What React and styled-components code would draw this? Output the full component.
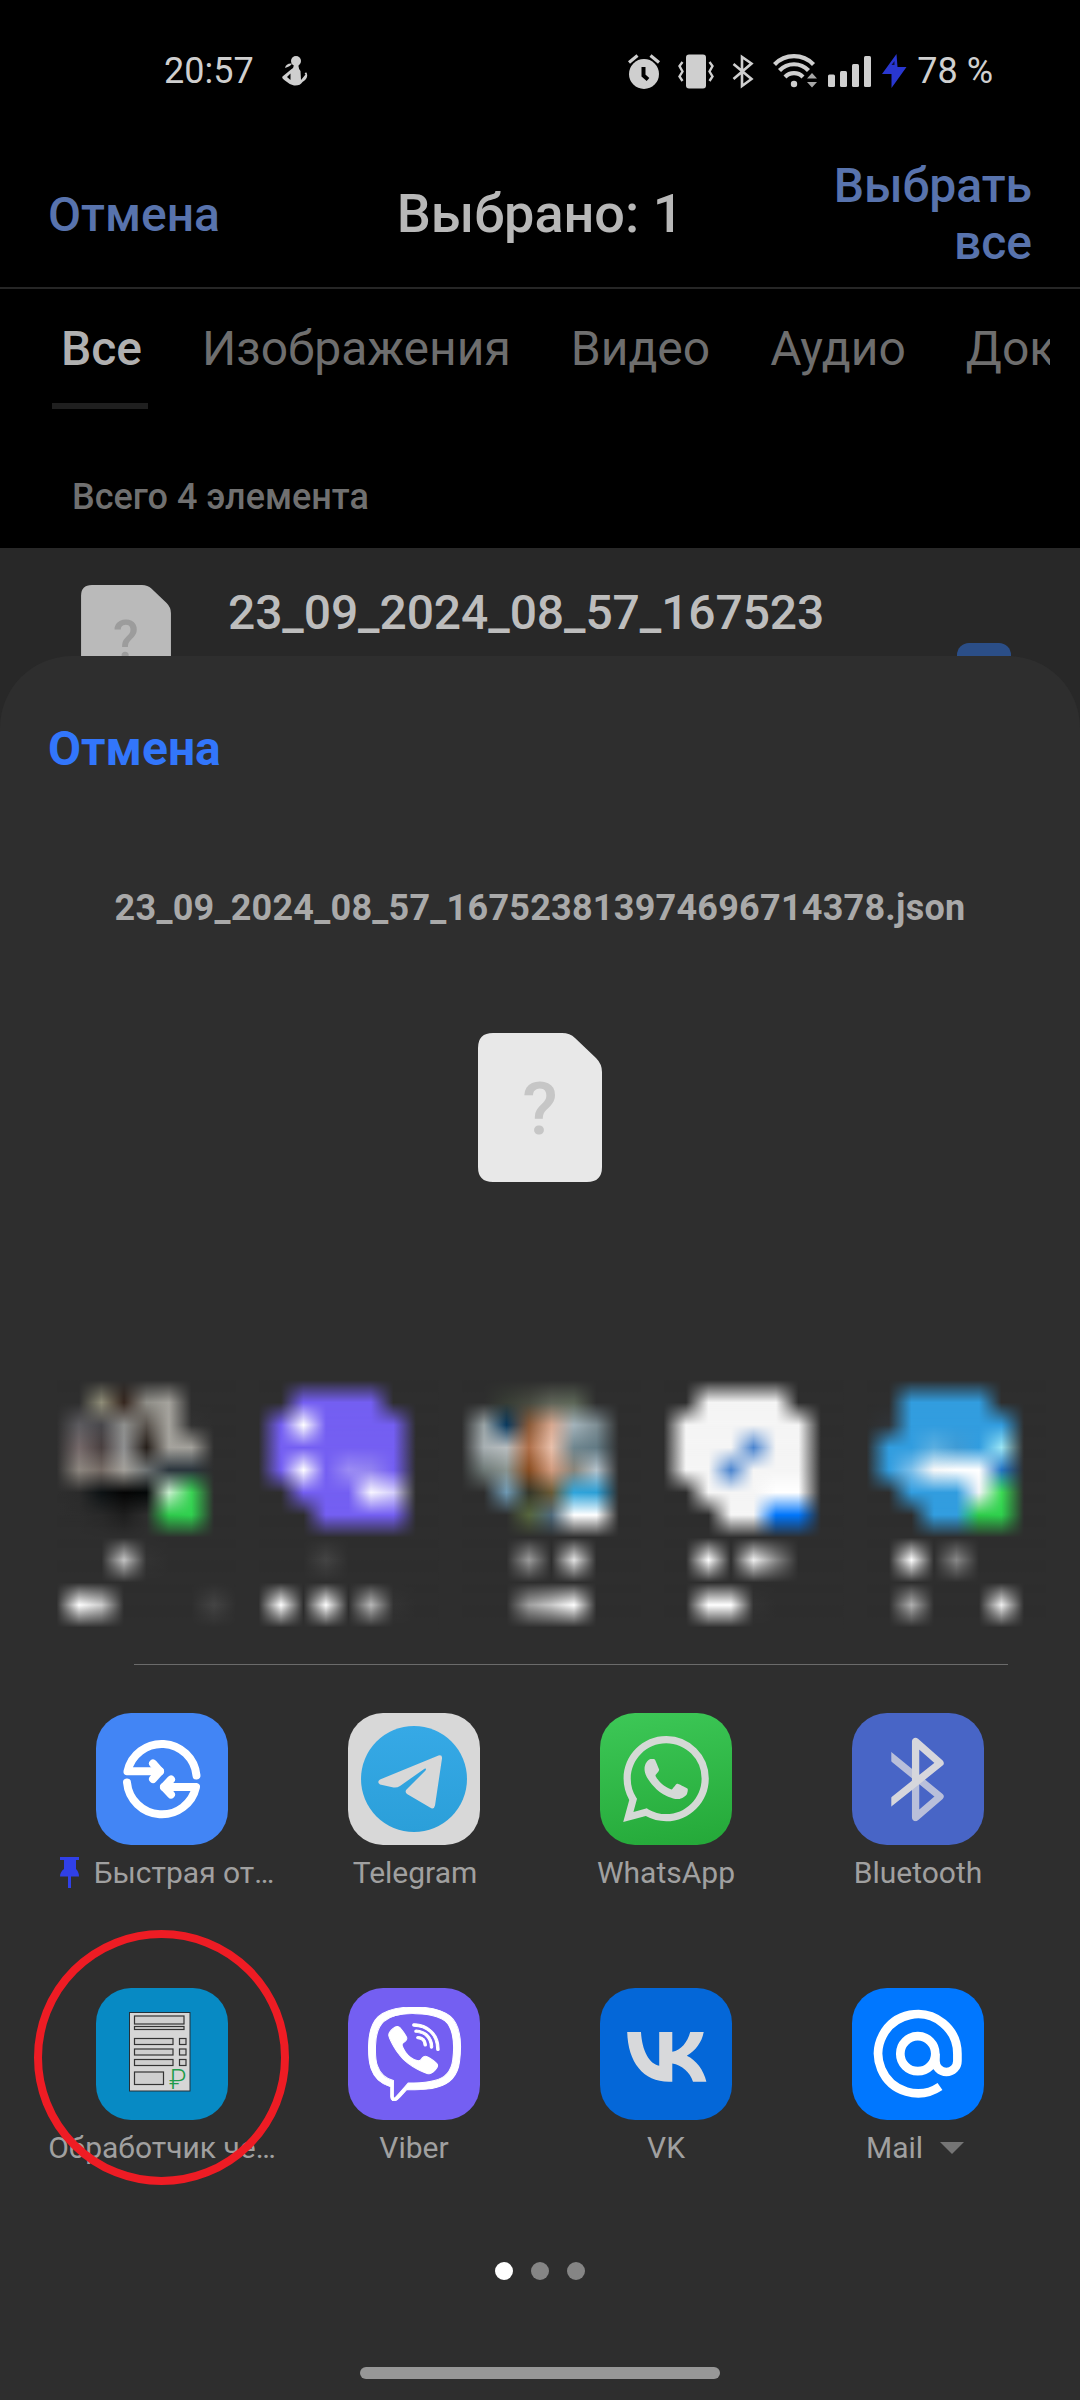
import React from "react";
import styled, { createGlobalStyle, css } from "styled-components";
import { SiWhatsapp, SiViber } from "react-icons/si";

const GlobalStyle = createGlobalStyle`
  *, *::before, *::after { box-sizing: border-box; }
  body { margin: 0; background: #000; font-family: Roboto, "Noto Sans", sans-serif; }
  svg { display: block; flex: none; }
`;

const Screen = styled.div`
  width: 1080px;
  height: 2400px;
  display: flex;
  flex-direction: column;
  overflow: hidden;
  background: #000;
`;

const StatusBar = styled.header`
  height: 142px;
  padding: 0 87px 0 164px;
  display: flex;
  align-items: center;
  justify-content: space-between;
  color: #cfcfcf;
  font-size: 36px;
`;

const StatusGroup = styled.div`
  display: flex;
  align-items: center;
  gap: ${(p) => p.$gap}px;
`;

const TopBar = styled.div`
  height: 147px;
  padding: 0 48px 1px;
  display: grid;
  grid-template-columns: 240px 1fr 240px;
  align-items: center;
  border-bottom: 2px solid #262626;
`;

const TextAction = styled.button`
  padding: 0;
  border: 0;
  background: none;
  font: 500 48px/57px Roboto, "Noto Sans", sans-serif;
  color: #5873ad;
  text-align: ${(p) => p.$align || "left"};
  ${(p) =>
    p.$accent &&
    css`
      color: #3276fb;
      font-weight: 700;
    `}
`;

const Title = styled.h1`
  margin: 0 0 1px;
  text-align: center;
  font-size: 54px;
  line-height: 64px;
  font-weight: 500;
  color: #b8b8b8;
`;

const Tabs = styled.nav`
  height: 120px;
  margin: 0 30px 0 52px;
  display: flex;
  gap: 45px;
  overflow: hidden;
`;

const Tab = styled.div`
  flex: none;
  height: 120px;
  padding: 31px 6px 0 9px;
  font-size: 48px;
  line-height: 57px;
  font-weight: ${(p) => (p.$active ? 500 : 400)};
  color: ${(p) => (p.$active ? "#b0b0b0" : "#6e6e6e")};
  border-bottom: 6px solid ${(p) => (p.$active ? "#1f1f1f" : "transparent")};
`;

const Summary = styled.div`
  height: 139px;
  padding: 67px 0 0 72px;
  font-size: 36px;
  line-height: 42px;
  font-weight: 500;
  color: #707070;
`;

const FileRow = styled.div`
  height: 108px;
  padding: 0 69px 0 81px;
  display: flex;
  align-items: flex-start;
  overflow: hidden;
  background: #282828;
  svg { margin-top: 37px; }
`;

const FileName = styled.div`
  flex: 1;
  margin: 36px 0 0 57px;
  font-size: 48px;
  line-height: 57px;
  font-weight: 500;
  letter-spacing: -0.1px;
  color: #bdbdbd;
`;

const Checkbox = styled.div`
  width: 54px;
  height: 54px;
  margin-top: 95px;
  border-radius: 12px;
  background: #2b4e87;
`;

const SheetBackdrop = styled.div`
  flex: 1;
  display: flex;
  background: #282828;
`;

const Sheet = styled.section`
  flex: 1;
  padding-top: 64px;
  display: flex;
  flex-direction: column;
  border-radius: 72px 72px 0 0;
  background: #2e2e2e;
`;

const SheetActions = styled.div`
  padding-left: 48px;
  line-height: 57px;
  display: flex;
`;

const SharedName = styled.div`
  margin-top: 110px;
  text-align: center;
  font-size: 36px;
  line-height: 42px;
  font-weight: 700;
  letter-spacing: 0.24px;
  color: #a9a9a9;
`;

const Preview = styled.div`
  margin-top: 104px;
  display: flex;
  justify-content: center;
`;

const Contacts = styled.div`
  margin-top: 189px;
  padding-left: 33.75px;
  height: 260px;
  display: flex;
`;

const Divider = styled.hr`
  width: 874px;
  height: 1px;
  margin: 33px 0 0 134px;
  border: 0;
  background: #6b6b6b;
`;

const Apps = styled.div`
  margin: 48px 36px 0;
  display: grid;
  grid-template-columns: repeat(4, 252px);
  grid-auto-rows: 180px;
  row-gap: 95px;
`;

const AppCell = styled.div`
  position: relative;
  display: flex;
  flex-direction: column;
  align-items: center;
`;

const Tile = styled.div`
  width: 132px;
  height: 132px;
  border-radius: 35px;
  overflow: hidden;
  display: flex;
  align-items: center;
  justify-content: center;
  background: ${(p) => p.$bg};
`;

const AppLabel = styled.div`
  margin-top: 10px;
  height: 35px;
  display: flex;
  align-items: center;
  gap: ${(p) => p.$gap || 0}px;
  transform: translateX(${(p) => p.$shift || 0}px);
  white-space: nowrap;
  font-size: 30px;
  line-height: 35px;
  color: #a0a0a0;
`;

const Highlight = styled.div`
  position: absolute;
  left: -2px;
  top: -58px;
  width: 255px;
  height: 255px;
  border: 8px solid #ee1c24;
  border-radius: 50%;
`;

const Pager = styled.div`
  margin-top: 94px;
  display: flex;
  justify-content: center;
  gap: 18px;
`;

const Dot = styled.span`
  width: 18px;
  height: 18px;
  border-radius: 50%;
  background: ${(p) => (p.$active ? "#ffffff" : "#858585")};
`;

const HomeBar = styled.div`
  width: 360px;
  height: 12px;
  margin: 87px auto 0;
  border-radius: 6px;
  background: #979797;
`;

/* ---------- status icons ---------- */

const FigureIcon = () => (
  <svg width="26" height="30" viewBox="0 0 26 30" fill="#cfcfcf">
    <circle cx="14" cy="5" r="5" />
    <path d="M3 12 Q4 7 10 7.5 Q9 10 3 12Z" />
    <path d="M11.5 8 H17 Q15.500 11.500 18.500 15 L19 24 L23.500 18.500 Q21.500 16.500 24.500 16.500 Q27 22 20.500 26 Q18 30 12 29.500 Q8 29 5 26 Q-1 22.500 .5 20.500 L9 13.500 Q12.500 12 11.500 8Z" />
    <path d="M5 21 L8.500 17.500 L8.500 24Z" fill="#000" />
  </svg>
);

const AlarmIcon = () => (
  <svg width="32" height="35" viewBox="0 0 32 35">
    <circle cx="16" cy="20" r="15" fill="#cfcfcf" />
    <path d="M1 8.500 L9.500 1.500 M31 8.500 L22.500 1.500" stroke="#cfcfcf" strokeWidth="3.200" />
    <path d="M15.500 13 V21.500 L20 25.500" fill="none" stroke="#000" strokeWidth="4" />
  </svg>
);

const VibrateIcon = () => (
  <svg width="36" height="35" viewBox="0 0 36 35">
    <rect x="8" y="0.500" width="20" height="34" rx="3" fill="#cfcfcf" />
    <path
      d="M4.500 8 L1.500 12 L4.500 17.500 L1.500 22.500 L4.500 27 M31.500 8 L34.500 12 L31.500 17.500 L34.500 22.500 L31.500 27"
      fill="none"
      stroke="#cfcfcf"
      strokeWidth="2.400"
    />
  </svg>
);

const BluetoothStatusIcon = () => (
  <svg width="23" height="35" viewBox="0 0 23 35">
    <path
      d="M1.500 10 L19.500 25 L10 32 V3 L19.500 9.500 L1.500 25"
      fill="none"
      stroke="#cfcfcf"
      strokeWidth="2.600"
    />
  </svg>
);

const WifiIcon = () => (
  <svg width="45" height="36" viewBox="0 0 45 36">
    <g fill="none" stroke="#cfcfcf" strokeWidth="4.200">
      <path d="M1.500 11.500 A27 27 0 0 1 40.500 11.500" />
      <path d="M6.500 17.500 A20 20 0 0 1 35.500 17.500" />
      <path d="M12 24 A12.500 12.500 0 0 1 30 24" />
    </g>
    <circle cx="21" cy="31" r="3.200" fill="#cfcfcf" />
    <path d="M34 25.500 L39 20 L44 25.500Z M34 29 L39 34.500 L44 29Z" fill="#a8a8a8" />
  </svg>
);

const SignalIcon = () => (
  <svg width="44" height="31" viewBox="0 0 44 31" fill="#cfcfcf">
    <rect x="0" y="18.500" width="7" height="12.500" rx="1.500" />
    <rect x="12" y="15" width="7" height="16" rx="1.500" />
    <rect x="24" y="8" width="7" height="23" rx="1.500" />
    <rect x="36" y="0" width="7" height="31" rx="1.500" />
  </svg>
);

const BoltIcon = () => (
  <svg width="25" height="34" viewBox="0 0 25 34">
    <path d="M14.500 0 L0 20 H9.500 V34 L24.500 13 H15.500Z" fill="#2937d0" />
    <path d="M12.500 7 V11 L9.500 11Z" fill="#000" opacity=".7" />
  </svg>
);

const PinIcon = () => (
  <svg width="19" height="31" viewBox="0 0 19 31" fill="#3040e8">
    <path d="M0 0 H19 V3 H16 V12 Q19 15 19 19.500 H0 Q0 15 4 12 V3 H0Z M8 19.500 H11 V31 H8Z" />
  </svg>
);

/* ---------- document ---------- */

const DocIcon = ({ width, height, fill, ink }) => (
  <svg width={width} height={height} viewBox="0 0 124 149">
    <path
      d="M12 0 H84 Q92 0 97 5 L118 25 Q124 31 124 39 V134 Q124 149 109 149 H15 Q0 149 0 134 V15 Q0 0 15 0Z"
      fill={fill}
    />
    <text
      x="62"
      y="101"
      textAnchor="middle"
      fontFamily="Roboto, sans-serif"
      fontSize="73"
      fontWeight="500"
      fill={ink}
    >
      ?
    </text>
  </svg>
);

/* ---------- pixelated contacts: rows of colours on a 22.5px grid ---------- */

const CELL = 22.5;
const COLUMNS = 8;
const EMPTY = "#2e2e2e";
const P = "#745ff2";
const W = "#f5f5f5";
const B = "#329ddf";
const _ = null;

const CONTACTS = [
  [
    [_, "#8f8d78", "#35261e", "#8f8e88", "#a5a39d"],
    ["#5d5c60", "#48474b", "#8f908e", "#5a544e", "#a5a39d", "#323232"],
    ["#75696a", "#4a4040", "#8e8f90", "#261f1a", "#a5a39d", "#a3a19b"],
    ["#8d8780", "#766c66", "#a4a19b", "#6f7475", "#2b353d", "#2b353d"],
    ["#2b2b2b", "#0d1214", "#050505", "#040808", "#c8efce", "#3bd455"],
    ["#2d2d2d", "#292929", "#1e1e1e", "#2e2e2e", "#2fc94c", "#30d14f"],
    [],
    [_, _, "#c4c4c4", "#333333"],
    [],
    ["#ffffff", "#cccccc", _, _, _, _, "#444444"],
  ],
  [
    [_, P, P, P, P],
    [P, "#ffffff", P, P, P, P],
    [P, P, P, P, P, P],
    [P, "#ffffff", P, "#9b8cf4", "#9283f0", P],
    [_, P, P, P, "#f8f6ff", "#d5cffb"],
    [_, _, P, P, P, P],
    [],
    [_, _, "#444444"],
    [],
    ["#ffffff", _, "#ffffff", _, "#b8b8b8", "#333333"],
  ],
  [
    [_, "#383d35", "#474a40", "#5f6458", "#5c6657"],
    ["#9aa4a6", "#0a3a5f", "#8a5a38", "#d8a890", "#a3b3bb", "#7f8f95"],
    ["#a8b0b3", "#b8bdbf", "#b0704a", "#e8c0ab", "#6f868f", "#627a84"],
    ["#6f7a78", "#8a9490", "#8a4e22", "#d29c80", "#8a857a", "#b5c2cb"],
    [_, "#6f99b3", "#35372a", "#6a5a35", "#2fa5dc", "#2c9fd6"],
    [_, _, "#56663e", "#4f6a7c", "#ffffff", "#ffffff"],
    [],
    [_, _, "#9c9c9c", _, "#e4e4e4"],
    [],
    [_, _, "#a0a0a0", "#c8c8c8", "#ffffff"],
  ],
  [
    [_, W, W, W, W],
    [W, W, W, W, W, W],
    [W, W, W, "#4a84cf", W, W],
    [W, W, "#4a84cf", W, W, W],
    [_, W, W, W, "#ffffff", "#ffffff"],
    [_, _, W, W, "#0176fb", "#0176fb"],
    [],
    [_, "#ffffff", _, "#f0f0f0", "#888888"],
    [],
    [_, "#ffffff", "#ffffff", "#333333"],
  ],
  [
    [_, B, B, B, B],
    ["#303438", B, B, B, B, B],
    [B, B, "#5aaee0", "#3f9bd5", B, "#9be6f5"],
    [B, "#7fc0ea", "#f8f8f8", "#ffffff", "#ffffff", "#2474c4"],
    [_, B, B, B, "#f2f4f8", "#3cdb55"],
    [_, _, B, B, "#2ecc4a", "#2fd04d"],
    [],
    [_, "#ffffff", _, "#888888"],
    [],
    [_, "#b0b0b0", _, _, _, "#f0f0f0"],
  ],
];

const Contact = ({ cells, id }) => {
  const rows = [[], ...cells, []];
  const band = (i) => ({ x: CELL, width: CELL * COLUMNS, y: 9 + i * CELL, height: CELL + 1 });
  return (
    <svg width="202.5" height="260" viewBox="0 0 202.5 260">
      <defs>
        <linearGradient id={`${id}-fade`} x1="0" y1="0" x2="0" y2="1">
          <stop offset="0" stopColor="#fff" stopOpacity="0" />
          <stop offset={CELL / (CELL + 1)} stopColor="#fff" stopOpacity="1" />
        </linearGradient>
        <mask
          id={`${id}-mask`}
          maskContentUnits="objectBoundingBox"
          x="0"
          y="-0.2"
          width="1"
          height="1.4"
        >
          <rect y="0" width="1" height="1.2" fill="#fff" fillOpacity="0" />
          <rect width="1" height="1" fill={`url(#${id}-fade)`} />
          <rect y="0.98" width="1" height="0.2" fill="#fff" />
        </mask>
        {rows.map((row, r) => (
          <linearGradient
            key={r}
            id={`${id}-row-${r}`}
            gradientUnits="userSpaceOnUse"
            x1={CELL}
            y1="0"
            x2={CELL * (COLUMNS + 1)}
            y2="0"
          >
            {Array.from({ length: COLUMNS + 1 }, (unused, k) => (
              <stop key={k} offset={k / COLUMNS} stopColor={row[k - 1] || EMPTY} />
            ))}
          </linearGradient>
        ))}
      </defs>
      {rows.slice(1).map((row, i) => (
        <g key={i}>
          <rect {...band(i)} height={CELL} fill={`url(#${id}-row-${i})`} />
          <rect {...band(i)} fill={`url(#${id}-row-${i + 1})`} mask={`url(#${id}-mask)`} />
        </g>
      ))}
    </svg>
  );
};

/* ---------- app icons, drawn on a 132px tile ---------- */

const Art = ({ children }) => (
  <svg width="132" height="132" viewBox="0 0 132 132">
    {children}
  </svg>
);

const NearbyArt = () => (
  <Art>
    <g fill="none" stroke="#fff" strokeWidth="8" strokeLinecap="round" strokeLinejoin="round">
      <path d="M100.500 62.500 A35 35 0 0 0 31.500 58.300 H64" />
      <path d="M57 50.500 L64 58.300 L57 66" />
      <path d="M31 69.500 A35 35 0 0 0 100 74 H68" />
      <path d="M75 66.500 L68 74 L75 81.500" />
    </g>
  </Art>
);

const TelegramArt = () => (
  <Art>
    <defs>
      <linearGradient id="tg" x1="0" y1="0" x2="0" y2="1">
        <stop offset="0" stopColor="#36a9e6" />
        <stop offset="1" stopColor="#2b9fd9" />
      </linearGradient>
    </defs>
    <circle cx="66" cy="66" r="53" fill="url(#tg)" />
    <path
      d="M32 66.500 L90.500 42.500 Q94.500 41.500 94 45.500 L87 92.500 Q86 97 82 94.500 L59 81 Q56.500 78.800 58.500 76.500 L77.500 57.500 Q79 55 76.500 55.700 L52 73 Q49 75 45.500 74.500 L32 71.500 Q28.500 69 32 66.500Z"
      fill="#d8d8d8"
    />
  </Art>
);

const WhatsAppArt = () => <SiWhatsapp size={86} color="#d5d9d6" />;

const BluetoothArt = () => (
  <Art>
    <clipPath id="bt">
      <path d="M39.300 24 H92 V108.500 H39.300Z" />
    </clipPath>
    <g fill="none" strokeWidth="7.300" strokeLinejoin="round" clipPath="url(#bt)">
      <path d="M36 41 L88 83.500 L63.600 104.500 V66" stroke="#b9bfda" />
      <path d="M36 91.500 L88 50 L63.600 28.500 V68" stroke="#d6d6dc" />
    </g>
  </Art>
);

const ReceiptArt = () => (
  <Art>
    <rect x="33.500" y="24.500" width="60.500" height="78.500" fill="#d6d6d6" stroke="#243038" />
    <g fill="#cfcfcf" stroke="#333" strokeWidth="1.200">
      <rect x="38.500" y="28" width="49.500" height="8" />
      <rect x="38.500" y="38.500" width="49.500" height="3" />
      {[50.5, 61, 71.5].map((y) => (
        <React.Fragment key={y}>
          <rect x="38.500" y={y} width="38.500" height="6" />
          <rect x="83.500" y={y} width="6.500" height="6" />
        </React.Fragment>
      ))}
      <rect x="38.500" y="84" width="29" height="12.500" />
    </g>
    <text x="73" y="100.500" fontFamily="Roboto, sans-serif" fontSize="27" fontWeight="300" fill="#1f9c4a">
      ₽
    </text>
  </Art>
);

const ViberGlyph = styled(SiViber)`
  width: 97px;
  height: 94px;
  color: #fff;
`;

const ViberArt = () => <ViberGlyph preserveAspectRatio="none" stroke="#fff" strokeWidth="0.25" />;

const VkArt = () => (
  <Art>
    <path
      d="M27.200 44 H41 C42 63 49.500 76 59.200 77.700 V44 H72.300 V63.700 C81 62.500 87.500 54 90.200 44 H103.700 C102 54.500 95 63 86.800 67.700 C96 72 103.500 81.500 106.400 93.700 H93 C90 84.500 82 77 72.300 75.600 V93.700 H69 C43 93.700 28 74 27.200 44Z"
      fill="#d8d9db"
    />
  </Art>
);

const MailArt = () => (
  <Art>
    <g fill="none" stroke="#fff" strokeWidth="8.700">
      <circle cx="65.800" cy="65.700" r="17.500" />
      <path d="M88 98.500 A39.600 39.600 0 1 1 105.400 65.700 V73 A11 11 0 0 1 83.400 73 V65.700" />
    </g>
  </Art>
);

const APPS = [
  { name: "Быстрая от…", bg: "#4285f5", Icon: NearbyArt, pinned: true, shift: 5, gap: 15 },
  { name: "Telegram", bg: "#d8d8d8", Icon: TelegramArt, shift: 1 },
  { name: "WhatsApp", bg: "linear-gradient(170deg,#3dc857,#24a838)", Icon: WhatsAppArt },
  { name: "Bluetooth", bg: "#4865c6", Icon: BluetoothArt },
  { name: "Обработчик че…", bg: "#078ac4", Icon: ReceiptArt, highlighted: true },
  { name: "Viber", bg: "#745ff2", Icon: ViberArt },
  { name: "VK", bg: "#0467d8", Icon: VkArt },
  { name: "Mail", bg: "#0077ff", Icon: MailArt, expandable: true, shift: -3, gap: 17 },
];

const Caret = () => (
  <svg width="24" height="12" viewBox="0 0 24 12">
    <path d="M0 0 H24 L12 12Z" fill="#757575" />
  </svg>
);

const TABS = ["Все", "Изображения", "Видео", "Аудио", "Документы"];

export default function App() {
  return (
    <Screen>
      <GlobalStyle />
      <StatusBar>
        <StatusGroup $gap={28}>
          <span>20:57</span>
          <FigureIcon />
        </StatusGroup>
        <StatusGroup $gap={10}>
          <StatusGroup $gap={18}>
            <AlarmIcon />
            <VibrateIcon />
            <BluetoothStatusIcon />
            <WifiIcon />
          </StatusGroup>
          <SignalIcon />
          <BoltIcon />
          <span>78 %</span>
        </StatusGroup>
      </StatusBar>

      <TopBar>
        <TextAction>Отмена</TextAction>
        <Title>Выбрано: 1</Title>
        <TextAction $align="right">Выбрать все</TextAction>
      </TopBar>

      <Tabs>
        {TABS.map((tab, i) => (
          <Tab key={tab} $active={i === 0}>
            {tab}
          </Tab>
        ))}
      </Tabs>

      <Summary>Всего 4 элемента</Summary>

      <FileRow>
        <DocIcon width={90} height={108} fill="#bababa" ink="#9c9c9c" />
        <FileName>23_09_2024_08_57_167523</FileName>
        <Checkbox />
      </FileRow>

      <SheetBackdrop>
        <Sheet>
          <SheetActions>
            <TextAction $accent>Отмена</TextAction>
          </SheetActions>
          <SharedName>23_09_2024_08_57_167523813974696714378.json</SharedName>
          <Preview>
            <DocIcon width={124} height={149} fill="#e8e8e8" ink="#c6c6c6" />
          </Preview>

          <Contacts>
            {CONTACTS.map((cells, i) => (
              <Contact key={i} id={`contact-${i}`} cells={cells} />
            ))}
          </Contacts>

          <Divider />

          <Apps>
            {APPS.map(({ name, bg, Icon, pinned, highlighted, expandable, shift, gap }) => (
              <AppCell key={name}>
                <Tile $bg={bg}>
                  <Icon />
                </Tile>
                <AppLabel $shift={shift} $gap={gap}>
                  {pinned && <PinIcon />}
                  <span>{name}</span>
                  {expandable && <Caret />}
                </AppLabel>
                {highlighted && <Highlight />}
              </AppCell>
            ))}
          </Apps>

          <Pager>
            <Dot $active />
            <Dot />
            <Dot />
          </Pager>
          <HomeBar />
        </Sheet>
      </SheetBackdrop>
    </Screen>
  );
}
